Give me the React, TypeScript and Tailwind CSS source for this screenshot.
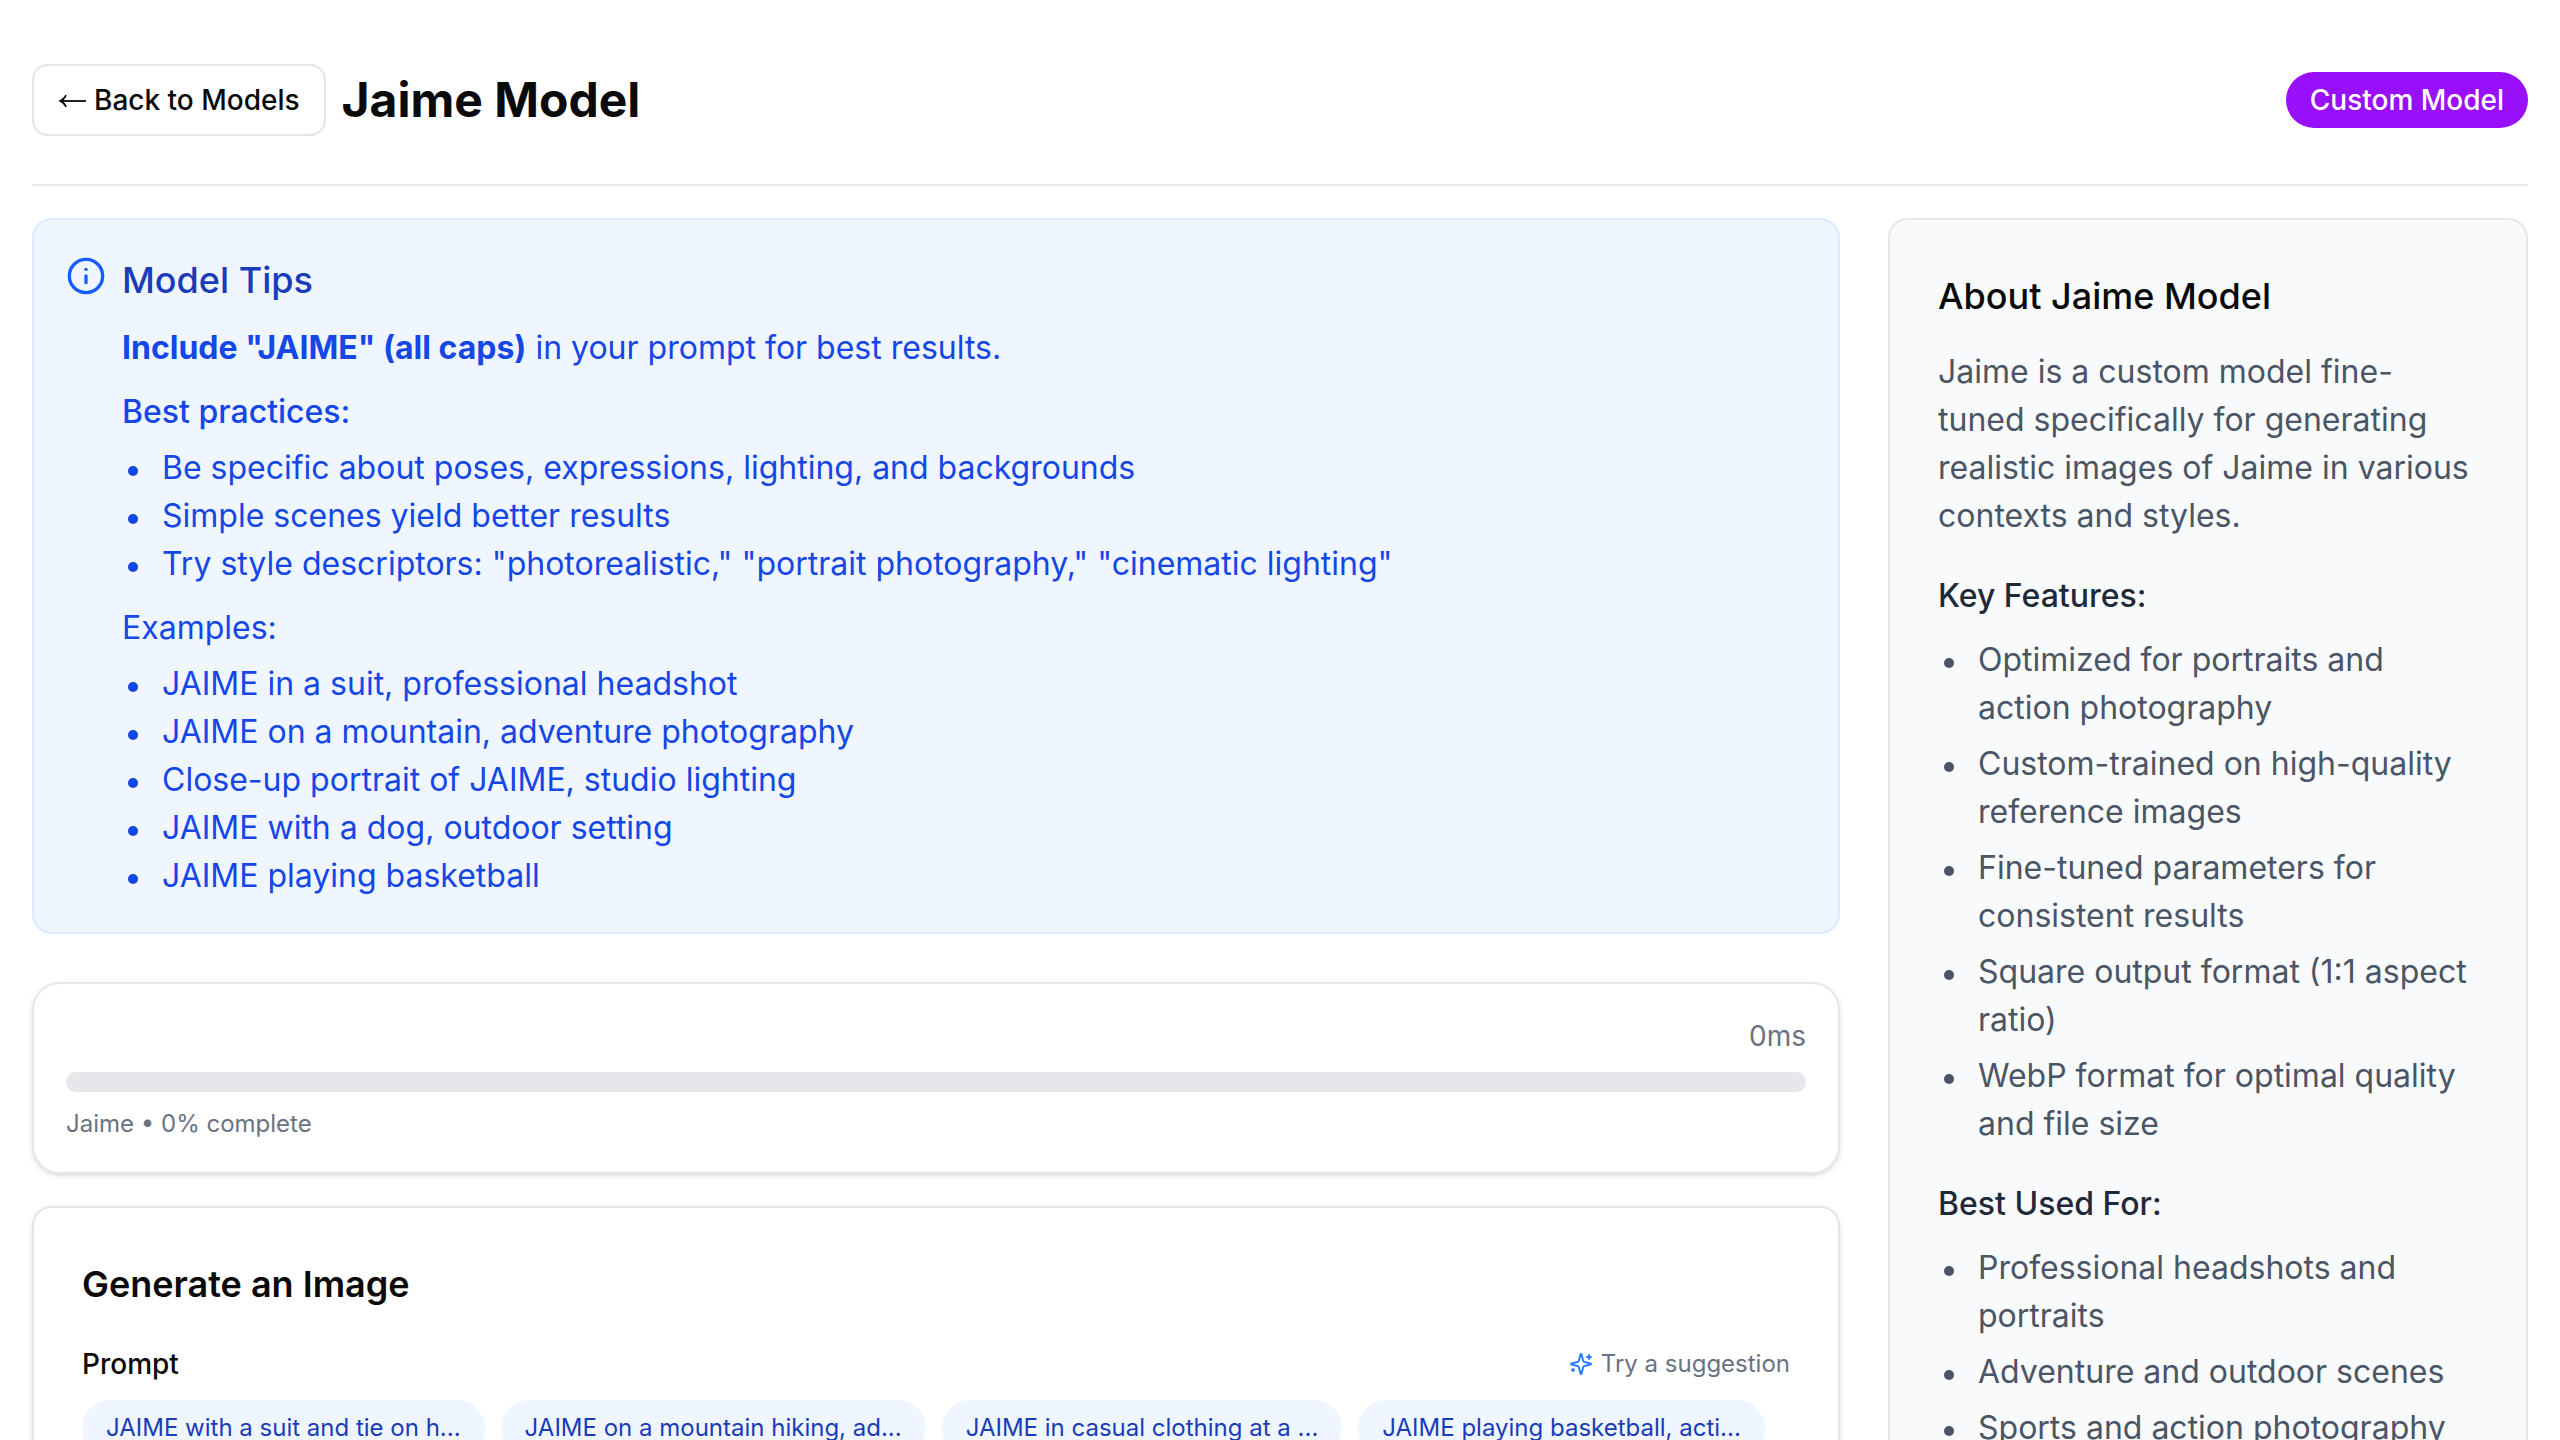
import type { ReactNode } from 'react';
import { Info } from 'lucide-react';

const practices = [
  'Be specific about poses, expressions, lighting, and backgrounds',
  'Simple scenes yield better results',
  'Try style descriptors: "photorealistic," "portrait photography," "cinematic lighting"',
];

const examples = [
  'JAIME in a suit, professional headshot',
  'JAIME on a mountain, adventure photography',
  'Close-up portrait of JAIME, studio lighting',
  'JAIME with a dog, outdoor setting',
  'JAIME playing basketball',
];

const suggestions = [
  'JAIME with a suit and tie on h...',
  'JAIME on a mountain hiking, ad...',
  'JAIME in casual clothing at a ...',
  'JAIME playing basketball, acti...',
];

const features = [
  'Optimized for portraits and action photography',
  'Custom-trained on high-quality reference images',
  'Fine-tuned parameters for consistent results',
  'Square output format (1:1 aspect ratio)',
  'WebP format for optimal quality and file size',
];

const uses = ['Professional headshots and portraits', 'Adventure and outdoor scenes', 'Sports and action photography'];

function SparklesIcon() {
  return (
    <svg
      className="size-6 shrink-0 text-blue-500"
      viewBox="0 0 24 24"
      fill="none"
      stroke="currentColor"
      strokeWidth="2"
      strokeLinecap="round"
      strokeLinejoin="round"
      aria-hidden="true"
    >
      <path d="M9.937 15.5A2 2 0 0 0 8.5 14.063l-6.135-1.582a.5.5 0 0 1 0-.962L8.5 9.936A2 2 0 0 0 9.937 8.5l1.582-6.135a.5.5 0 0 1 .963 0L14.063 8.5A2 2 0 0 0 15.5 9.937l6.135 1.581a.5.5 0 0 1 0 .964L15.5 14.063a2 2 0 0 0-1.437 1.437l-1.582 6.135a.5.5 0 0 1-.963 0z" />
      <path d="M20 3v4" />
      <path d="M22 5h-4" />
      <path d="M4 17v2" />
      <path d="M5 18H3" />
    </svg>
  );
}

function ArrowIcon() {
  return (
    <svg className="h-4 w-7 shrink-0" viewBox="0 0 28 16" fill="none" aria-hidden="true">
      <path d="M5 9H28" stroke="currentColor" strokeWidth="1.8" />
      <path d="M0.5 9C3.5 7.600 5.800 5.500 7.300 2.800L8.800 3.600C7.900 5.400 6.900 6.900 5.400 8.200V9.800C6.900 11.100 7.900 12.600 8.800 14.400L7.300 15.200C5.800 12.500 3.500 10.400 0.500 9Z" fill="currentColor" />
    </svg>
  );
}

function Header() {
  return (
    <header className="flex items-center justify-between border-b-2 border-gray-200 pt-8 pb-12">
      <div className="flex items-center gap-4">
        <button
          type="button"
          className="flex h-18 items-center gap-2 rounded-2xl border-2 border-[#e5e5e5] bg-white px-6 text-[28px] leading-10 font-medium whitespace-nowrap"
        >
          <ArrowIcon />
          Back to Models
        </button>
        <h1 className="text-5xl leading-16 font-bold">Jaime Model</h1>
      </div>
      <span className="rounded-full bg-[#9810fa] px-6 py-2 text-[28px] leading-10 font-medium text-white">
        Custom Model
      </span>
    </header>
  );
}

function BulletList({ items, spaced = false }: { items: string[]; spaced?: boolean }) {
  return (
    <ul className={spaced ? 'flex flex-col gap-2' : 'flex flex-col'}>
      {items.map((item) => (
        <li
          key={item}
          className="flex items-start gap-6 pl-1.5 before:mt-[22px] before:size-2.5 before:shrink-0 before:rounded-full before:bg-current before:content-['']"
        >
          <span>{item}</span>
        </li>
      ))}
    </ul>
  );
}

function ModelTips() {
  return (
    <section className="flex items-start gap-4 rounded-[20px] border-2 border-blue-100 bg-blue-50 p-8">
      <Info className="mt-1 size-10 shrink-0 text-[#155dfc]" aria-hidden="true" />
      <div className="flex flex-col gap-4 text-[32px] leading-12 text-[#1447e6]">
        <h2 className="text-4xl leading-14 font-medium text-[#193cb8]">Model Tips</h2>
        <p>
          <strong className="font-bold">Include "JAIME" (all caps)</strong> in your prompt for best results.
        </p>
        <div className="flex flex-col gap-2">
          <p className="font-medium">Best practices:</p>
          <BulletList items={practices} />
        </div>
        <div className="flex flex-col gap-2">
          <p>Examples:</p>
          <BulletList items={examples} />
        </div>
      </div>
    </section>
  );
}

function ProgressCard() {
  return (
    <section className="flex flex-col gap-4 rounded-[28px] border-2 border-gray-200 bg-white p-8 text-gray-500 shadow-[0_2px_6px_rgba(0,0,0,0.1),0_2px_4px_-2px_rgba(0,0,0,0.1)]">
      <p className="text-right text-[28px] leading-10">0ms</p>
      <div
        role="progressbar"
        aria-label="Generation progress"
        aria-valuenow={0}
        aria-valuemin={0}
        aria-valuemax={100}
        className="h-5 rounded-full bg-gray-200"
      />
      <p className="text-2xl leading-8">Jaime • 0% complete</p>
    </section>
  );
}

function GenerateCard() {
  return (
    <section className="flex flex-col gap-8 rounded-[20px] border-2 border-[#e5e5e5] bg-white p-12 shadow-[0_2px_6px_rgba(0,0,0,0.1),0_2px_4px_-2px_rgba(0,0,0,0.1)]">
      <h2 className="text-4xl leading-14 font-semibold">Generate an Image</h2>
      <div className="flex flex-col gap-4">
        <div className="flex items-center justify-between">
          <h3 className="text-[28px] leading-10 font-medium">Prompt</h3>
          <button type="button" className="flex items-center gap-2 text-2xl leading-8 text-gray-500">
            <SparklesIcon />
            Try a suggestion
          </button>
        </div>
        <div className="flex flex-wrap gap-4">
          {suggestions.map((text) => (
            <button
              key={text}
              type="button"
              className="rounded-full bg-blue-50 px-6 py-3 text-2xl leading-8 whitespace-pre text-[#193cb8]"
            >
              {text}
            </button>
          ))}
        </div>
      </div>
    </section>
  );
}

function AboutSection({ title, children }: { title: string; children: ReactNode }) {
  return (
    <div className="flex flex-col gap-4">
      <h3 className="font-medium text-gray-800">{title}</h3>
      {children}
    </div>
  );
}

function About() {
  return (
    <aside className="flex w-160 shrink-0 flex-col gap-8 rounded-[20px] border-2 border-gray-200 bg-gray-50 p-12 text-[32px] leading-12 text-gray-600">
      <div className="flex flex-col gap-6">
        <h2 className="text-4xl leading-14 font-medium text-[#0a0a0a]">About Jaime Model</h2>
        <p>
          Jaime is a custom model fine-tuned specifically for generating realistic images of Jaime in various contexts
          and styles.
        </p>
      </div>
      <AboutSection title="Key Features:">
        <BulletList items={features} spaced />
      </AboutSection>
      <AboutSection title="Best Used For:">
        <BulletList items={uses} spaced />
      </AboutSection>
    </aside>
  );
}

export default function App() {
  return (
    <div className="h-screen overflow-y-auto bg-white font-['Inter',sans-serif] text-[#0a0a0a] antialiased [scrollbar-width:none]">
      <div className="flex flex-col gap-8 p-8">
        <Header />
        <main className="flex gap-12">
          <div className="flex min-w-0 flex-1 flex-col gap-12">
            <ModelTips />
            <div className="flex flex-col gap-8">
              <ProgressCard />
              <GenerateCard />
            </div>
          </div>
          <About />
        </main>
      </div>
    </div>
  );
}
